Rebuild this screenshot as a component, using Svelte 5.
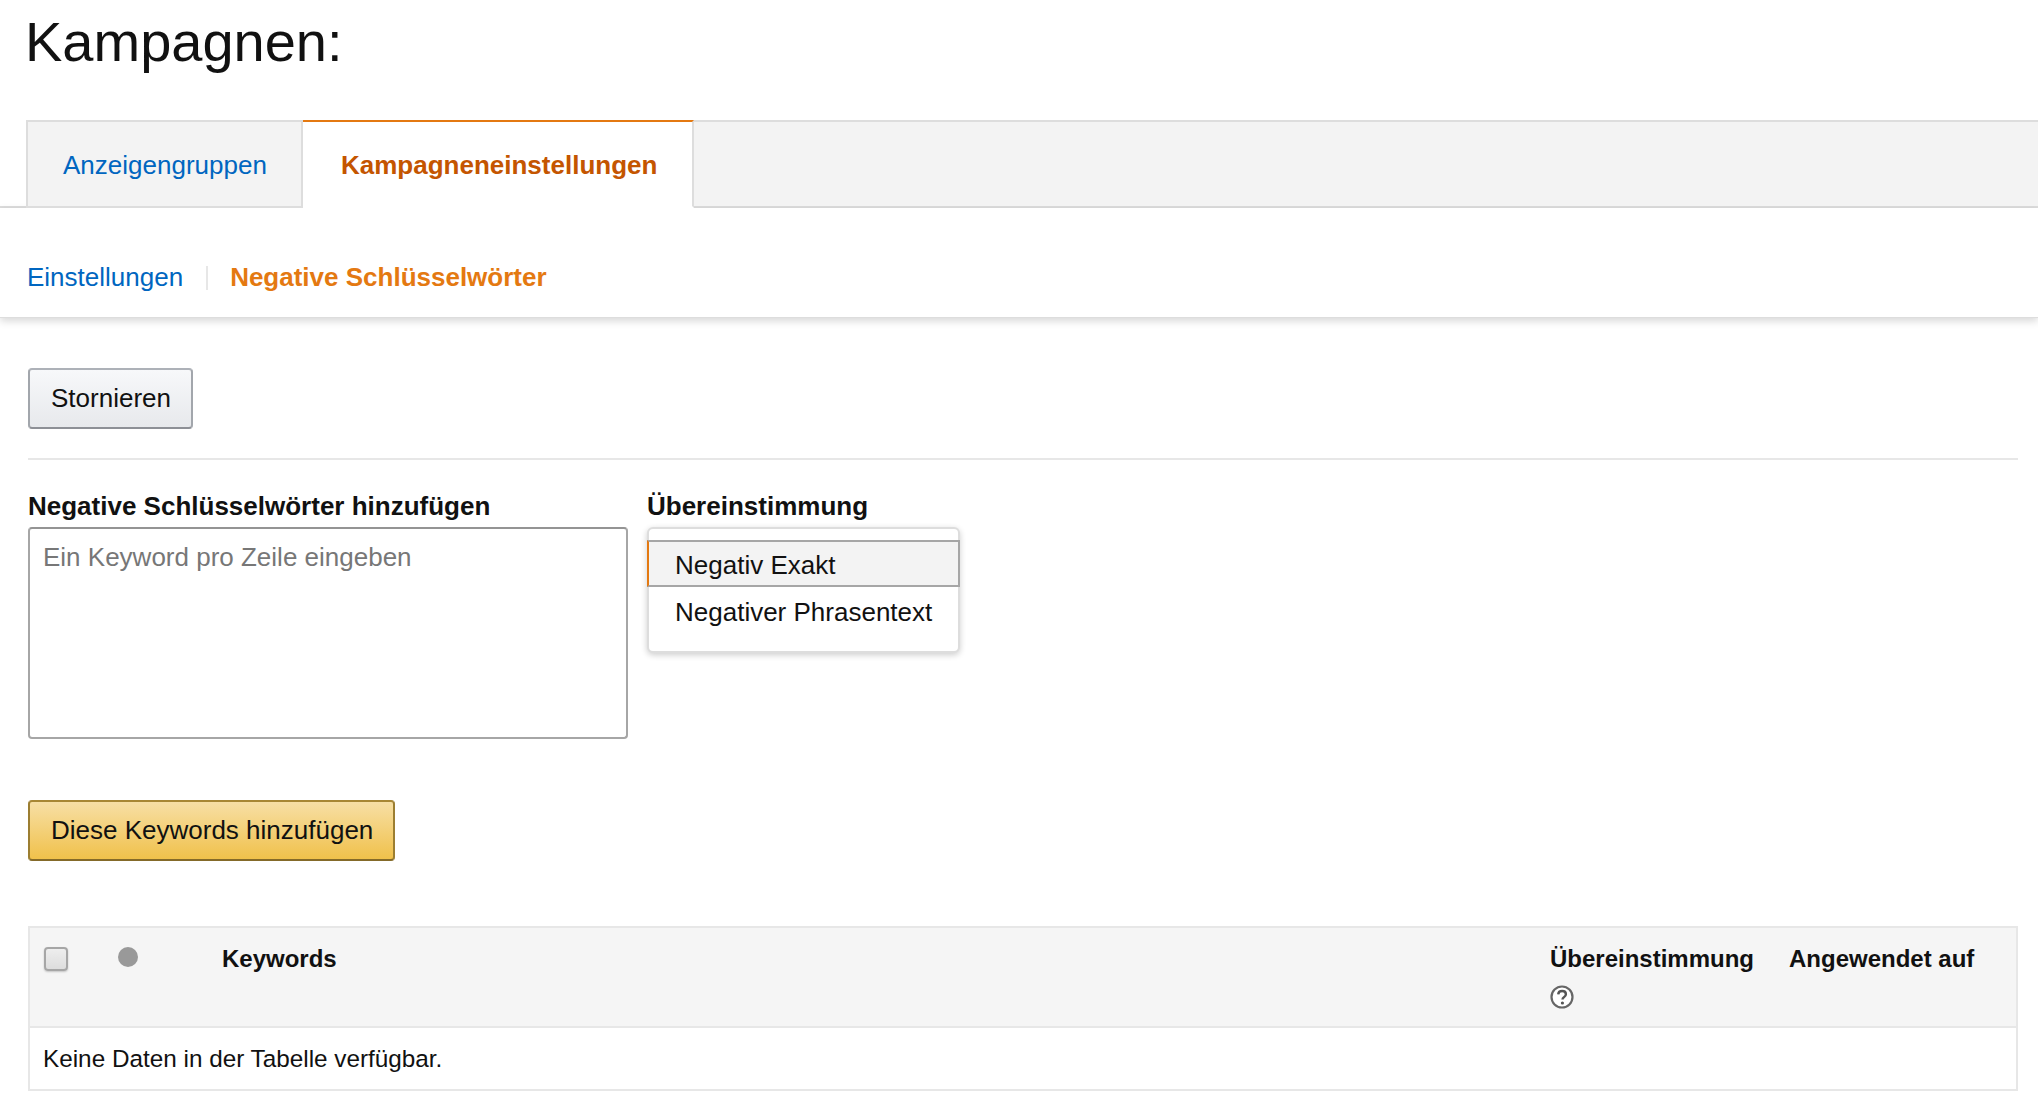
<script>
  const rows = [];
</script>

<div class="page">
  <h1>Kampagnen:</h1>

  <div class="tabs">
    <a class="tab" href="#groups">Anzeigengruppen</a>
    <a class="tab active" href="#settings">Kampagneneinstellungen</a>
    <div class="tab-rest"></div>
  </div>

  <nav class="subnav">
    <a href="#settings">Einstellungen</a>
    <span class="sep"></span>
    <a class="current" href="#negative">Negative Schlüsselwörter</a>
  </nav>

  <div class="content">
    <button class="btn">Stornieren</button>
    <hr />

    <div class="form-row">
      <div class="field">
        <label for="kw">Negative Schlüsselwörter hinzufügen</label>
        <textarea id="kw" placeholder="Ein Keyword pro Zeile eingeben"></textarea>
      </div>
      <div class="field">
        <span class="label">Übereinstimmung</span>
        <ul class="match">
          <li class="selected">Negativ Exakt</li>
          <li>Negativer Phrasentext</li>
        </ul>
      </div>
    </div>

    <button class="btn primary">Diese Keywords hinzufügen</button>

    <table>
      <thead>
        <tr>
          <th class="c-check"><span class="check"></span></th>
          <th class="c-dot"><span class="dot"></span></th>
          <th class="c-kw">Keywords</th>
          <th class="c-match">
            Übereinstimmung
            <svg class="help" viewBox="0 0 24 24" width="24" height="24">
              <circle cx="12" cy="12" r="10.5" fill="#fff" stroke="#666" stroke-width="2.2" />
              <path d="M8.2 9.4c.2-2.2 1.800-3.400 3.900-3.400 2.200 0 3.800 1.300 3.800 3.200 0 1.500-.9 2.300-2 3-.9.600-1.400 1.100-1.400 2.300" fill="none" stroke="#555" stroke-width="2.400" />
              <circle cx="12.400" cy="18" r="1.600" fill="#555" />
            </svg>
          </th>
          <th class="c-applied">Angewendet auf</th>
        </tr>
      </thead>
      <tbody>
        {#each rows as row}
          <tr><td colspan="5">{row}</td></tr>
        {:else}
          <tr><td class="empty" colspan="5">Keine Daten in der Tabelle verfügbar.</td></tr>
        {/each}
      </tbody>
    </table>
  </div>
</div>

<style>
  :global(body) {
    margin: 0;
    background: #fff;
  }

  .page {
    height: 1104px;
    overflow: hidden;
    font-family: "Liberation Sans", Arial, sans-serif;
    font-size: 26px;
    color: #111;
  }

  h1 {
    margin: 0;
    padding: 10px 0 0 25px;
    height: 110px;
    box-sizing: border-box;
    font-size: 56px;
    line-height: 64px;
    font-weight: 400;
  }

  .tabs {
    display: flex;
    height: 88px;
    margin-top: 10px;
    padding-left: 26px;
    box-sizing: border-box;
    border-bottom: 2px solid #ddd;
  }

  .tab {
    display: flex;
    align-items: center;
    box-sizing: border-box;
    height: 88px;
    width: 277px;
    padding-left: 35px;
    padding-top: 3px;
    background: #f3f3f3;
    border: 2px solid #ddd;
    color: #0066c0;
    text-decoration: none;
  }

  .tab.active {
    width: 391px;
    padding-left: 38px;
    background: #fff;
    border-top-color: #e47911;
    border-left: none;
    border-bottom-color: #fff;
    color: #c45500;
    font-weight: 700;
  }

  .tab-rest {
    flex: 1;
    height: 86px;
    background: #f3f3f3;
    border-top: 2px solid #ddd;
    box-sizing: border-box;
  }

  .subnav {
    display: flex;
    align-items: center;
    height: 110px;
    padding-left: 27px;
    padding-top: 30px;
    box-sizing: border-box;
    box-shadow: 0 3px 8px rgba(0, 0, 0, 0.16);
    border-bottom: 1px solid #ddd;
  }

  .subnav a {
    color: #0066c0;
    text-decoration: none;
  }

  .subnav a.current {
    color: #e47911;
    font-weight: 700;
  }

  .sep {
    width: 2px;
    height: 24px;
    margin: 0 22.5px;
    background: #e7e7e7;
  }

  .content {
    padding: 50px 20px 0 28px;
  }

  .btn {
    display: block;
    box-sizing: border-box;
    height: 61px;
    padding: 0 20px 0 21px;
    border: 2px solid #adb1b8;
    border-color: #adb1b8 #a2a6ac #8d9096;
    border-radius: 4px;
    background: linear-gradient(#f7f8fa, #e7e9ec);
    font: inherit;
    color: #111;
  }

  .btn.primary {
    border-color: #a88734 #9c7e31 #846a29;
    background: linear-gradient(#f7dfa5, #f0c14b);
  }

  hr {
    height: 2px;
    margin: 29px 0 0;
    border: none;
    background: #e7e7e7;
  }

  .form-row {
    display: flex;
    gap: 19px;
    margin-top: 33px;
    margin-bottom: 61px;
  }

  .field {
    display: flex;
    flex-direction: column;
  }

  label,
  .label {
    height: 34px;
    line-height: 27px;
    font-weight: 700;
  }

  textarea {
    box-sizing: border-box;
    width: 600px;
    height: 212px;
    padding: 12px 13px;
    border: 2px solid #a6a6a6;
    border-top-color: #949494;
    border-radius: 4px;
    font: inherit;
    line-height: 32px;
    resize: none;
    outline: none;
  }

  textarea::placeholder {
    color: #777;
    opacity: 1;
  }

  .match {
    box-sizing: border-box;
    width: 313px;
    height: 126px;
    margin: 0;
    padding: 11px 0 0;
    list-style: none;
    background: #fff;
    border: 2px solid #ddd;
    border-radius: 6px;
    box-shadow: 0 2px 6px rgba(0, 0, 0, 0.2);
  }

  .match li {
    box-sizing: border-box;
    height: 47px;
    line-height: 43px;
    padding-left: 26px;
    margin-left: -2px;
    margin-right: -2px;
    border: 2px solid transparent;
  }

  .match li + li {
    padding-top: 2px;
  }

  .match li.selected {
    line-height: 46px;
    background: #f3f3f3;
    border-color: #a6a6a6;
    border-left-color: #e47911;
  }

  table {
    width: 100%;
    margin-top: 65px;
    border-collapse: collapse;
    table-layout: fixed;
    font-size: 24px;
    border: 2px solid #e7e7e7;
  }

  thead tr {
    height: 100px;
    background: #f5f5f5;
    border-bottom: 2px solid #e7e7e7;
  }

  th {
    padding: 15px 0 0;
    vertical-align: top;
    text-align: left;
    line-height: 32px;
    font-weight: 700;
  }

  .c-check {
    width: 89px;
    padding-left: 14px;
    box-sizing: border-box;
  }

  .c-dot {
    width: 104px;
  }

  .c-match {
    width: 239px;
  }

  .c-applied {
    width: 227px;
  }

  .check {
    display: block;
    box-sizing: border-box;
    width: 24px;
    height: 24px;
    margin-top: 4px;
    border: 2px solid #a6a6a6;
    border-radius: 4px;
    background: linear-gradient(#eee, #ddd);
    box-shadow: 0 1px 2px rgba(0, 0, 0, 0.2);
  }

  .dot {
    display: block;
    width: 20px;
    height: 20px;
    margin-top: 4px;
    border-radius: 50%;
    background: #999;
  }

  .help {
    display: block;
    margin-top: 10px;
  }

  td {
    padding: 0;
  }

  .empty {
    height: 61px;
    padding-left: 13px;
    font-size: 24.3px;
  }
</style>
